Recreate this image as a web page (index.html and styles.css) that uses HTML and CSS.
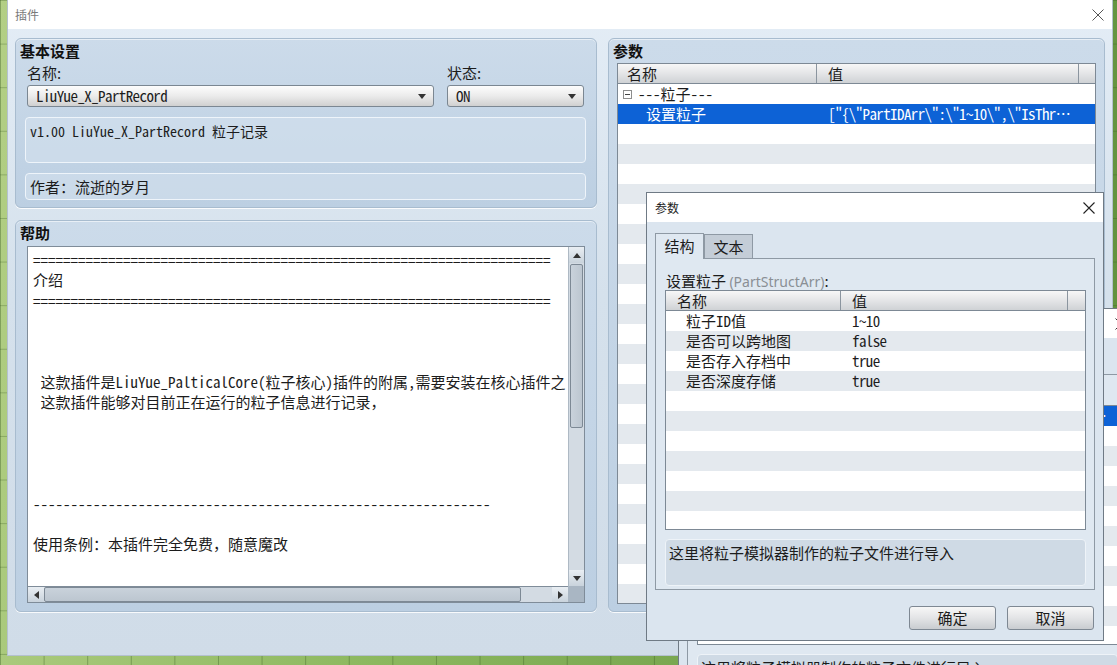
FILE: index.html
```html
<!DOCTYPE html>
<html lang="zh">
<head>
<meta charset="utf-8">
<title>插件</title>
<link rel="stylesheet" href="styles.css">
</head>
<body>
<div class="desktop">

  <div class="win main-win">
    <div class="titlebar">
      <span class="title">插件</span>
      <svg class="xbtn" width="12" height="12" viewBox="0 0 12 12"><path d="M0.5 0.5 L11.5 11.5 M11.5 0.5 L0.5 11.5" stroke="#555" stroke-width="1" fill="none"/></svg>
    </div>
    <div class="main-body">
      <div class="left-col">
        <section class="group g-basic">
          <div class="group-title">基本设置</div>
          <div class="field-row">
            <div class="field f-name">
              <div class="label">名称:</div>
              <div class="combo hw lat">LiuYue_X_PartRecord</div>
            </div>
            <div class="field f-state">
              <div class="label">状态:</div>
              <div class="combo hw lat">ON</div>
            </div>
          </div>
          <div class="infobox desc hw">v1.00 LiuYue_X_PartRecord 粒子记录</div>
          <div class="infobox author">作者：流逝的岁月</div>
        </section>

        <section class="group g-help">
          <div class="group-title">帮助</div>
          <div class="textarea">
            <div class="ta-text"><span class="hw">=====================================================================</span>
介绍
<span class="hw">=====================================================================</span>



<span class="hw"> </span>这款插件是<span class="hw">LiuYue_PalticalCore(</span>粒子核心<span class="hw">)</span>插件的附属<span class="hw">,</span>需要安装在核心插件之
<span class="hw"> </span>这款插件能够对目前正在运行的粒子信息进行记录，




<span class="hw">-------------------------------------------------------------</span>

使用条例：本插件完全免费，随意魔改</div>
            <div class="vscroll">
              <div class="sbtn up"><span class="tri t-up"></span></div>
              <div class="vtrack"><div class="vthumb"></div></div>
              <div class="sbtn down"><span class="tri t-down"></span></div>
            </div>
            <div class="hscroll">
              <div class="sbtn left"><span class="tri t-left"></span></div>
              <div class="htrack"><div class="hthumb"></div></div>
              <div class="sbtn right"><span class="tri t-right"></span></div>
            </div>
            <div class="corner"></div>
          </div>
        </section>
      </div>

      <section class="group g-params">
        <div class="group-title">参数</div>
        <div class="plist">
          <div class="phead">
            <div class="hc pc1">名称</div>
            <div class="hc pc2">值</div>
            <div class="hc pc3"></div>
          </div>
          <div class="pbody">
            <div class="prow">
              <div class="cell pc1 tree"><span class="tbox"></span><span class="hw">---</span>粒子<span class="hw">---</span></div>
            </div>
            <div class="prow sel">
              <div class="cell pc1 ind">设置粒子</div>
              <div class="cell pc2 val hw lat">["{\"PartIDArr\":\"1~10\",\"IsThrough\":\"false\",\"IsSave\":\"true\"}"]</div>
            </div>
          </div>
        </div>
      </section>
    </div>
  </div>

  <div class="win dlg mid">
    <div class="titlebar dtitle">
      <span class="title"></span>
      <svg class="xbtn" width="12" height="12" viewBox="0 0 12 12"><path d="M0.5 0.5 L11.5 11.5 M11.5 0.5 L0.5 11.5" stroke="#333" stroke-width="1" fill="none"/></svg>
    </div>
    <div class="dbody mid-body">
      <div class="tabpage mid-page">
        <div class="mlist">
          <div class="mrow sel"><div class="cell mcell hw lat">{"IsDeep":"true"}</div></div>
        </div>
        <div class="dbox">这里将粒子模拟器制作的粒子文件进行导入</div>
      </div>
    </div>
  </div>

  <div class="win dlg front">
    <div class="titlebar dtitle">
      <span class="title">参数</span>
      <svg class="xbtn" width="12" height="12" viewBox="0 0 12 12"><path d="M0.5 0.5 L11.5 11.5 M11.5 0.5 L0.5 11.5" stroke="#222" stroke-width="1.1" fill="none"/></svg>
    </div>
    <div class="dbody">
      <div class="tabs">
        <div class="tab active">结构</div>
        <div class="tab">文本</div>
      </div>
      <div class="tabpage">
        <div class="flabel">设置粒子 <span class="gray">(PartStructArr)</span>:</div>
        <div class="stable">
          <div class="shead">
            <div class="hc sc1">名称</div>
            <div class="hc sc2">值</div>
            <div class="hc sc3"></div>
          </div>
          <div class="sbody">
            <div class="srow"><div class="cell sc1">粒子<span class="hw">ID</span>值</div><div class="cell sc2 hw lat">1~10</div></div>
            <div class="srow"><div class="cell sc1">是否可以跨地图</div><div class="cell sc2 hw lat">false</div></div>
            <div class="srow"><div class="cell sc1">是否存入存档中</div><div class="cell sc2 hw lat">true</div></div>
            <div class="srow"><div class="cell sc1">是否深度存储</div><div class="cell sc2 hw lat">true</div></div>
          </div>
        </div>
        <div class="dbox">这里将粒子模拟器制作的粒子文件进行导入</div>
      </div>
      <div class="btns">
        <div class="btn">确定</div>
        <div class="btn">取消</div>
      </div>
    </div>
  </div>

</div>
</body>
</html>
```

FILE: styles.css
```css
* { box-sizing: border-box; }
html, body { margin: 0; padding: 0; }
body {
  width: 1117px;
  height: 665px;
  overflow: hidden;
  font-family: "Noto Sans CJK SC", "Noto Sans", sans-serif;
  font-size: 15px;
  color: #1c1c1c;
}
.hw { font-feature-settings: "hwid" 1; }
.lat { letter-spacing: -0.6px; }

.desktop {
  position: relative;
  width: 1117px;
  height: 665px;
  overflow: hidden;
  background-color: #7aa94d;
  background-image:
    linear-gradient(to right, rgba(45, 80, 25, .35) 1px, transparent 1px),
    linear-gradient(to bottom, rgba(45, 80, 25, .28) 1px, transparent 1px),
    linear-gradient(100deg, #b3cf85 0%, #8cb85f 40%, #5f8f3c 100%);
  background-size: 43.6px 43.6px, 43.6px 43.6px, 100% 100%;
}

.win { position: absolute; display: flex; flex-direction: column; }

/* ---------- title bars ---------- */
.titlebar {
  flex: none;
  height: 29px;
  background: #fff;
  display: flex;
  align-items: center;
  justify-content: space-between;
  padding: 0 8px 0 7px;
}
.title { font-size: 12px; color: #7a7a7a; }
.xbtn { display: block; }

/* ---------- main window ---------- */
.main-win {
  z-index: 1;
  left: 7px;
  top: 0;
  width: 1106px;
  height: 656px;
  border: 1px solid #b4c1ce;
  border-top: none;
  background: linear-gradient(#e4edf6, #d5e1ec 45%, #d0dce8);
}
.main-body {
  flex: 1;
  display: flex;
  gap: 11px;
  padding: 9px 7px 0 7px;
  align-items: flex-start;
}
.left-col {
  width: 582px;
  display: flex;
  flex-direction: column;
  gap: 12px;
}

.group {
  border: 1px solid #a8bccf;
  border-radius: 6px;
  background: linear-gradient(#ccdbea, #bccfe2);
  box-shadow: inset 0 1px 0 rgba(255,255,255,.55), 0 1px 0 rgba(255,255,255,.85);
  padding: 3px 10px 0 9px;
}
.group-title {
  height: 18px;
  line-height: 18px;
  font-weight: bold;
  font-size: 15px;
  margin-left: -5px;
  color: #111;
}

.g-basic { height: 170px; }
.field-row {
  display: flex;
  gap: 13px;
  padding: 0 2px;
  margin-top: 4px;
}
.field { display: flex; flex-direction: column; }
.f-name { width: 407px; }
.f-state { flex: 1; }
.label { height: 18px; line-height: 18px; font-size: 15px; }
.combo {
  position: relative;
  margin-top: 3px;
  height: 22px;
  line-height: 20px;
  border: 1px solid #7b8792;
  border-radius: 3px;
  background: linear-gradient(#fdfdfd, #ebebeb 50%, #d0d0d0);
  padding-left: 8px;
  font-size: 15px;
}
.combo::after {
  content: "";
  position: absolute;
  right: 7px;
  top: 8px;
  border-left: 4px solid transparent;
  border-right: 4px solid transparent;
  border-top: 5px solid #333;
}
.infobox {
  margin-top: 10px;
  border: 1px solid #eef4fa;
  border-radius: 4px;
  background: rgba(214, 226, 238, .55);
  padding: 4px 4px 0 4px;
  line-height: 18px;
  font-size: 15px;
}
.desc { height: 46px; font-size: 14px; }
.author { height: 27px; }

.g-help { height: 392px; }
.textarea {
  margin: 4px 1px 0 2px;
  height: 357px;
  border: 1px solid #7f8c99;
  background: #fff;
  display: grid;
  grid-template-columns: 1fr 16px;
  grid-template-rows: 1fr 16px;
}
.ta-text {
  white-space: pre;
  overflow: hidden;
  line-height: 20.3px;
  padding: 3px 0 0 5px;
  font-size: 15px;
}
.vscroll {
  display: flex;
  flex-direction: column;
  background: #d3dbe3;
  border-left: 1px solid #aeb9c4;
}
.vtrack { flex: 1; padding: 1px 1px 0 1px; }
.vthumb {
  height: 164px;
  border: 1px solid #7d8995;
  border-radius: 2px;
  background: linear-gradient(to right, #c9d2db, #bcc6d0);
}
.hscroll {
  display: flex;
  background: #d3dbe3;
  border-top: 1px solid #7f8c99;
}
.htrack { flex: 1; padding: 0 31px 0 0; }
.hthumb {
  height: 15px;
  border: 1px solid #7d8995;
  border-radius: 2px;
  background: linear-gradient(#c9d2db, #bcc6d0);
}
.sbtn {
  flex: none;
  width: 16px;
  height: 16px;
  background: linear-gradient(#e9eef3, #c9d3dc);
  display: flex;
  align-items: center;
  justify-content: center;
}
.vscroll .sbtn { width: 15px; }
.hscroll .sbtn { height: 15px; }
.corner { background: #a9b6c3; }
.tri { width: 0; height: 0; display: block; }
.t-up { border-left: 4px solid transparent; border-right: 4px solid transparent; border-bottom: 5px solid #333; }
.t-down { border-left: 4px solid transparent; border-right: 4px solid transparent; border-top: 5px solid #333; }
.t-left { border-top: 4px solid transparent; border-bottom: 4px solid transparent; border-right: 5px solid #333; }
.t-right { border-top: 4px solid transparent; border-bottom: 4px solid transparent; border-left: 5px solid #333; }

/* ---------- parameter group ---------- */
.g-params { flex: 1; height: 574px; }
.plist {
  margin: 3px -2px 0 -1px;
  height: 541px;
  border: 1px solid #7d8995;
  background: #fff;
  display: flex;
  flex-direction: column;
}
.phead, .shead {
  flex: none;
  display: flex;
  height: 20px;
  border-bottom: 1px solid #7d8995;
  background: linear-gradient(#f7f7f7, #e4e5e7 50%, #cfd2d5);
}
.hc {
  line-height: 19px;
  font-size: 15px;
  border-right: 1px solid #8b959f;
  white-space: nowrap;
}
.hc:last-child { border-right: none; flex: 1; }
.pc1 { width: 199px; padding-left: 9px; }
.pc2 { width: 262px; padding-left: 11px; }
.pc3 { flex: 1; }
.pbody {
  flex: 1;
  background: repeating-linear-gradient(#fff 0 20px, #e4e9ee 20px 40px);
}
.prow, .srow, .mrow { display: flex; height: 20px; }
.cell {
  line-height: 20px;
  white-space: nowrap;
  overflow: hidden;
  text-overflow: ellipsis;
  font-size: 15px;
}
.prow .pc2 { padding-right: 4px; }
.tree { padding-left: 5px; display: flex; align-items: center; }
.tbox {
  position: relative;
  width: 9px;
  height: 9px;
  border: 1px solid #8d8d8d;
  margin-right: 6px;
  background: #fff;
}
.tbox::after {
  content: "";
  position: absolute;
  left: 1px;
  top: 3px;
  width: 5px;
  height: 1px;
  background: #444;
}
.ind { padding-left: 28px; }
.sel { background: #0d62d6; color: #fff; }

/* ---------- dialogs ---------- */
.dlg {
  width: 458px;
  height: 449px;
  border: 1px solid #6f7a85;
  background: #dbe5ef;
}
.front { left: 646px; top: 192px; z-index: 3; }
.mid { left: 678px; top: 308px; z-index: 2; }
.dtitle { padding: 0 8px 0 8px; }
.dtitle .title { color: #222; font-size: 12px; }
.dbody {
  flex: 1;
  padding: 11px 8px 0 8px;
  display: flex;
  flex-direction: column;
}
.tabs { display: flex; height: 25px; align-items: flex-end; }
.tab {
  width: 49px;
  height: 24px;
  border: 1px solid #8e99a4;
  border-bottom: none;
  background: #c4cdd7;
  text-align: center;
  line-height: 23px;
  font-size: 15px;
}
.tab.active {
  height: 26px;
  align-self: flex-start;
  background: #dfe8f1;
  position: relative;
  z-index: 1;
  margin-bottom: -1px;
}
.tabpage {
  height: 332px;
  border: 1px solid #8e99a4;
  background: #dfe8f1;
  padding: 13px 8px 3px 9px;
}
.flabel {
  height: 18px;
  line-height: 18px;
  padding-left: 1px;
  font-size: 15px;
}
.gray { color: #8a8f95; font-family: "Noto Sans", sans-serif; font-size: 14px; }
.stable {
  height: 240px;
  border: 1px solid #7d8995;
  background: #fff;
  display: flex;
  flex-direction: column;
}
.shead { height: 20px; }
.sc1 { width: 175px; padding-left: 11px; }
.sc2 { width: 227px; padding-left: 11px; }
.sc3 { flex: 1; }
.srow .sc1 { padding-left: 20px; }
.sbody {
  flex: 1;
  background: repeating-linear-gradient(#fff 0 20px, #e4e9ee 20px 40px);
}
.dbox {
  margin-top: 9px;
  height: 47px;
  border: 1px solid #eef3f8;
  border-radius: 4px;
  background: #cfdae5;
  padding: 4px 3px 0 3px;
  line-height: 18px;
  font-size: 15px;
}
.btns {
  display: flex;
  justify-content: flex-end;
  gap: 11px;
  margin-top: 16px;
  padding-right: 1px;
}
.btn {
  width: 87px;
  height: 24px;
  border: 1px solid #7e8893;
  border-radius: 3px;
  background: linear-gradient(#f7f7f7, #e3e4e6 50%, #c9ccd0);
  text-align: center;
  line-height: 22px;
  font-size: 15px;
}

/* middle (background) dialog */
.mid-body { padding-top: 36px; }
.mid-page { padding-top: 30px; height: 400px; }
.mlist {
  height: 240px;
  border: 1px solid #7d8995;
  background: #fff repeating-linear-gradient(#e4e9ee 0 20px, #fff 20px 40px);
}
.mcell { width: 415px; padding-left: 380px; }
```
